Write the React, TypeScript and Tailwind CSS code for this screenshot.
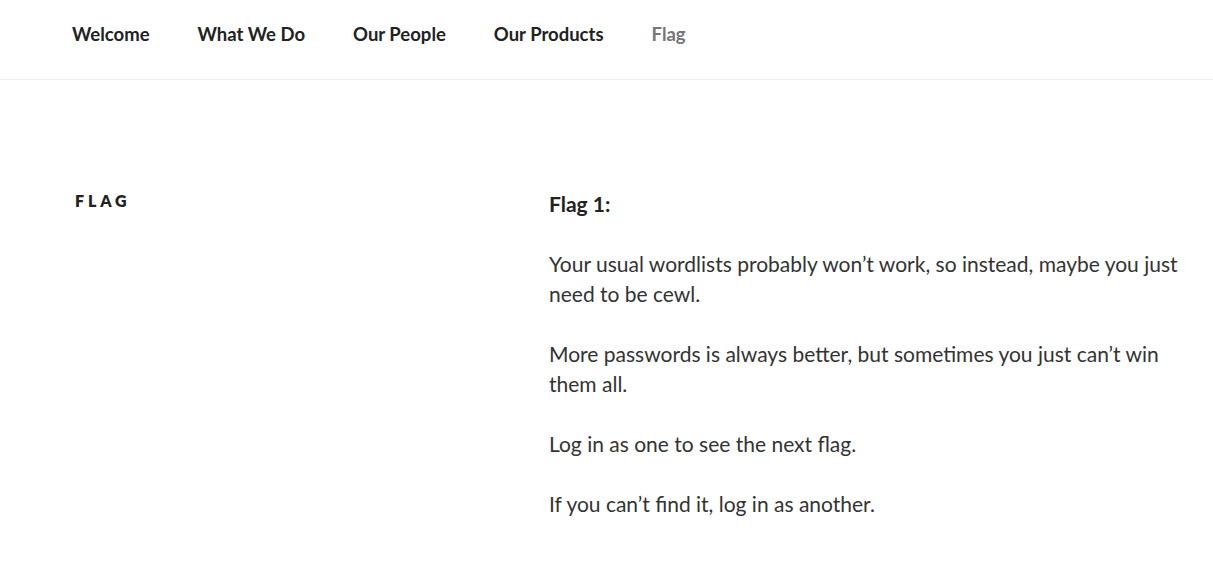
export default function App() {
  const nav = ["Welcome", "What We Do", "Our People", "Our Products"];

  return (
    <div className="min-h-[576px] bg-white text-[#333]" style={{ fontFamily: "Lato, 'Noto Sans', sans-serif" }}>
      <nav className="h-[80px] border-b border-[#eee]">
        <ul className="flex items-center h-[70px] pl-[72px] gap-12 text-[18.5px] font-bold text-[#222]">
          {nav.map((item) => (
            <li key={item}>{item}</li>
          ))}
          <li className="text-[#767676]">Flag</li>
        </ul>
      </nav>

      <main className="flex pt-[108px] pl-[75px]">
        <header className="w-[474px] shrink-0">
          <h1 className="text-[16px] font-extrabold uppercase tracking-[0.24em] text-[#222] leading-[26px]">
            Flag
          </h1>
        </header>
        <div className="w-[645px] text-[21px] leading-[30px]">
          <p className="font-bold text-[#222] mb-[30px] mt-[1px]">Flag 1:</p>
          <p className="mb-[30px]">
            Your usual wordlists probably won’t work, so instead, maybe you just need to be cewl.
          </p>
          <p className="mb-[30px]">
            More passwords is always better, but sometimes you just can’t win them all.
          </p>
          <p className="mb-[30px]">Log in as one to see the next flag.</p>
          <p>If you can’t find it, log in as another.</p>
        </div>
      </main>
    </div>
  );
}
